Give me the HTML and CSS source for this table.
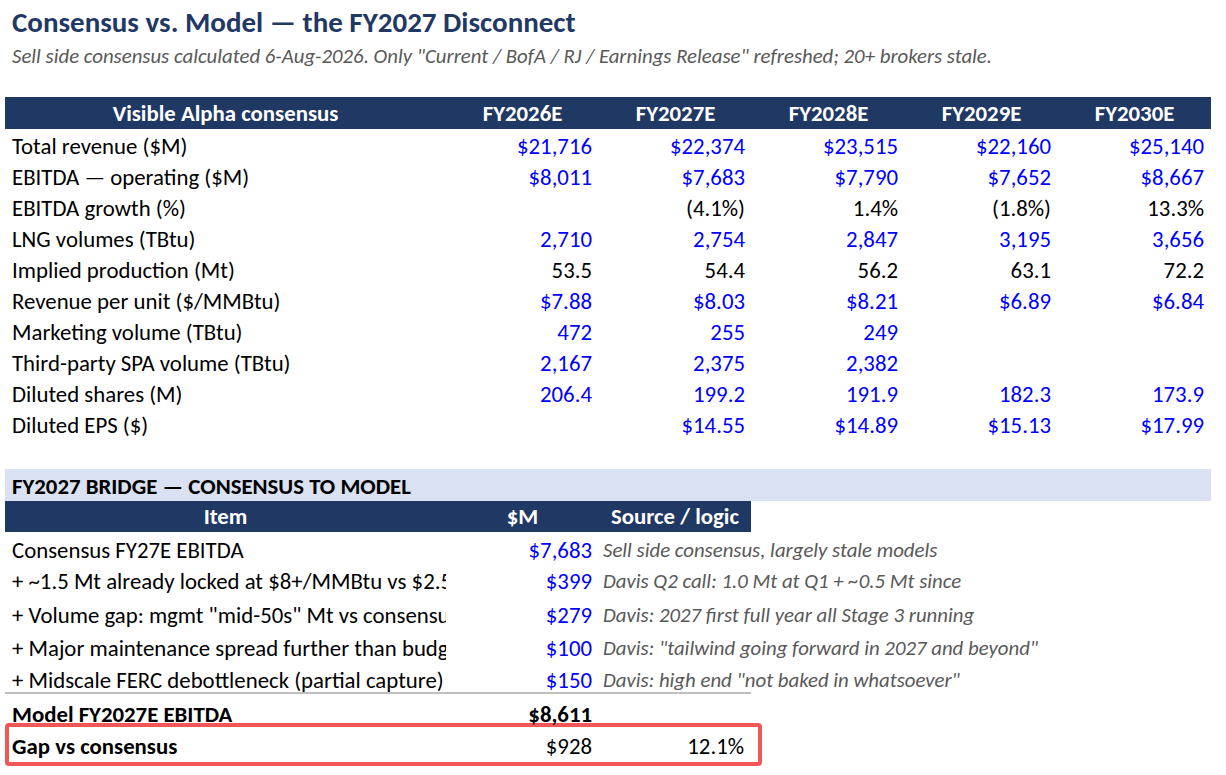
FILE: index.html
```html
<!DOCTYPE html>
<html>
<head>
<meta charset="utf-8">
<link rel="stylesheet" href="styles.css">
</head>
<body>
<div class="page">
  <h1 class="title">Consensus vs. Model — the FY2027 Disconnect</h1>
  <p class="subtitle">Sell side consensus calculated 6-Aug-2026. Only "Current / BofA / RJ / Earnings Release" refreshed; 20+ brokers stale.</p>

  <div class="va">
    <div class="row head">
      <div class="c ctr">Visible Alpha consensus</div>
      <div class="c ctr">FY2026E</div>
      <div class="c ctr">FY2027E</div>
      <div class="c ctr">FY2028E</div>
      <div class="c ctr">FY2029E</div>
      <div class="c ctr">FY2030E</div>
    </div>
    <div class="row">
      <div class="c lbl">Total revenue ($M)</div>
      <div class="c num blue">$21,716</div><div class="c num blue">$22,374</div><div class="c num blue">$23,515</div><div class="c num blue">$22,160</div><div class="c num blue">$25,140</div>
    </div>
    <div class="row">
      <div class="c lbl">EBITDA — operating ($M)</div>
      <div class="c num blue">$8,011</div><div class="c num blue">$7,683</div><div class="c num blue">$7,790</div><div class="c num blue">$7,652</div><div class="c num blue">$8,667</div>
    </div>
    <div class="row">
      <div class="c lbl">EBITDA growth (%)</div>
      <div class="c num"></div><div class="c num">(4.1%)</div><div class="c num">1.4%</div><div class="c num">(1.8%)</div><div class="c num">13.3%</div>
    </div>
    <div class="row">
      <div class="c lbl">LNG volumes (TBtu)</div>
      <div class="c num blue">2,710</div><div class="c num blue">2,754</div><div class="c num blue">2,847</div><div class="c num blue">3,195</div><div class="c num blue">3,656</div>
    </div>
    <div class="row">
      <div class="c lbl">Implied production (Mt)</div>
      <div class="c num">53.5</div><div class="c num">54.4</div><div class="c num">56.2</div><div class="c num">63.1</div><div class="c num">72.2</div>
    </div>
    <div class="row">
      <div class="c lbl">Revenue per unit ($/MMBtu)</div>
      <div class="c num blue">$7.88</div><div class="c num blue">$8.03</div><div class="c num blue">$8.21</div><div class="c num blue">$6.89</div><div class="c num blue">$6.84</div>
    </div>
    <div class="row">
      <div class="c lbl">Marketing volume (TBtu)</div>
      <div class="c num blue">472</div><div class="c num blue">255</div><div class="c num blue">249</div><div class="c num"></div><div class="c num"></div>
    </div>
    <div class="row">
      <div class="c lbl">Third-party SPA volume (TBtu)</div>
      <div class="c num blue">2,167</div><div class="c num blue">2,375</div><div class="c num blue">2,382</div><div class="c num"></div><div class="c num"></div>
    </div>
    <div class="row">
      <div class="c lbl">Diluted shares (M)</div>
      <div class="c num blue">206.4</div><div class="c num blue">199.2</div><div class="c num blue">191.9</div><div class="c num blue">182.3</div><div class="c num blue">173.9</div>
    </div>
    <div class="row">
      <div class="c lbl">Diluted EPS ($)</div>
      <div class="c num"></div><div class="c num blue">$14.55</div><div class="c num blue">$14.89</div><div class="c num blue">$15.13</div><div class="c num blue">$17.99</div>
    </div>
  </div>

  <div class="bridge">
    <div class="band">FY2027 BRIDGE — CONSENSUS TO MODEL</div>
    <div class="brow head">
      <div class="c ctr">Item</div>
      <div class="c ctr">$M</div>
      <div class="c ctr">Source / logic</div>
    </div>
    <div class="brow item r1">
      <div class="c lbl clip">Consensus FY27E EBITDA</div>
      <div class="c num blue">$7,683</div>
      <div class="c src">Sell side consensus, largely stale models</div>
    </div>
    <div class="brow item r2">
      <div class="c lbl clip">+ ~1.5 Mt already locked at $8+/MMBtu vs $2.50 spot</div>
      <div class="c num blue">$399</div>
      <div class="c src">Davis Q2 call: 1.0 Mt at Q1 + ~0.5 Mt since</div>
    </div>
    <div class="brow item r3">
      <div class="c lbl clip">+ Volume gap: mgmt "mid-50s" Mt vs consensus</div>
      <div class="c num blue">$279</div>
      <div class="c src">Davis: 2027 first full year all Stage 3 running</div>
    </div>
    <div class="brow item r4">
      <div class="c lbl clip">+ Major maintenance spread further than budgeted</div>
      <div class="c num blue">$100</div>
      <div class="c src">Davis: "tailwind going forward in 2027 and beyond"</div>
    </div>
    <div class="brow item r5">
      <div class="c lbl clip">+ Midscale FERC debottleneck (partial capture)</div>
      <div class="c num blue">$150</div>
      <div class="c src">Davis: high end "not baked in whatsoever"</div>
    </div>
    <div class="brow total">
      <div class="c lbl bold">Model FY2027E EBITDA</div>
      <div class="c num bold">$8,611</div>
      <div class="c"></div>
    </div>
    <div class="gapbox">
      <div class="grow">
        <div class="c glbl bold">Gap vs consensus</div>
        <div class="c num">$928</div>
        <div class="c num">12.1%</div>
      </div>
    </div>
  </div>
</div>
</body>
</html>
```
FILE: styles.css
```css
* { box-sizing: border-box; }
html, body { margin: 0; padding: 0; background: #ffffff; }
body {
  font-family: "Carlito", "Lato", "Liberation Sans", sans-serif;
  color: #000000;
}
.page { padding: 4px 0 0 5px; width: 1226px; }
.title {
  margin: 0 0 0 7px;
  font-size: 29px;
  line-height: 37px;
  font-weight: 700;
  color: #1f3864;
}
.subtitle {
  margin: 2px 0 0 7px;
  font-size: 20.8px;
  line-height: 26px;
  font-style: italic;
  color: #595959;
}
.va { margin-top: 28px; width: 1206px; }
.row {
  display: grid;
  grid-template-columns: 441px repeat(5, 153px);
  height: 31px;
  font-size: 22.8px;
  line-height: 35px;
}
.row.head {
  height: 32px;
  line-height: 33px;
  background: #203864;
  color: #ffffff;
  font-weight: 700;
}
.c { white-space: nowrap; }
.ctr { text-align: center; }
.lbl { padding-left: 7px; }
.num { text-align: right; padding-right: 7px; }
.blue { color: #0000ff; }
.bold { font-weight: 700; }

.bridge { margin-top: 30px; }
.band {
  width: 1206px;
  height: 32px;
  line-height: 35px;
  background: #d9e1f2;
  font-size: 22.8px;
  font-weight: 700;
  padding-left: 7px;
  color: #000000;
}
.brow {
  display: grid;
  grid-template-columns: 441px 153px 152px;
  width: 746px;
  font-size: 22.8px;
  height: 32px;
  line-height: 34px;
}
.brow.head {
  height: 31px;
  line-height: 31px;
  background: #203864;
  color: #ffffff;
  font-weight: 700;
}
.brow.r1 { line-height: 36px; }
.brow.r2 { line-height: 34px; }
.brow.r3 { line-height: 38px; }
.brow.r4 { line-height: 40px; }
.brow.r5 { line-height: 40px; height: 34px; border-bottom: 2px solid #c0c0c0; }
.brow.total { height: 29px; line-height: 40px; }
.clip { overflow: hidden; }
.src {
  overflow: visible;
  font-style: italic;
  color: #595959;
  font-size: 20.8px;
  padding-left: 4px;
}
.gapbox {
  width: 757px;
  height: 43px;
  border: 4px solid #f25757;
  border-radius: 4px;
}
.grow {
  display: grid;
  grid-template-columns: 437px 153px 152px;
  font-size: 22.8px;
  line-height: 39px;
}
.glbl { padding-left: 3px; }
```
